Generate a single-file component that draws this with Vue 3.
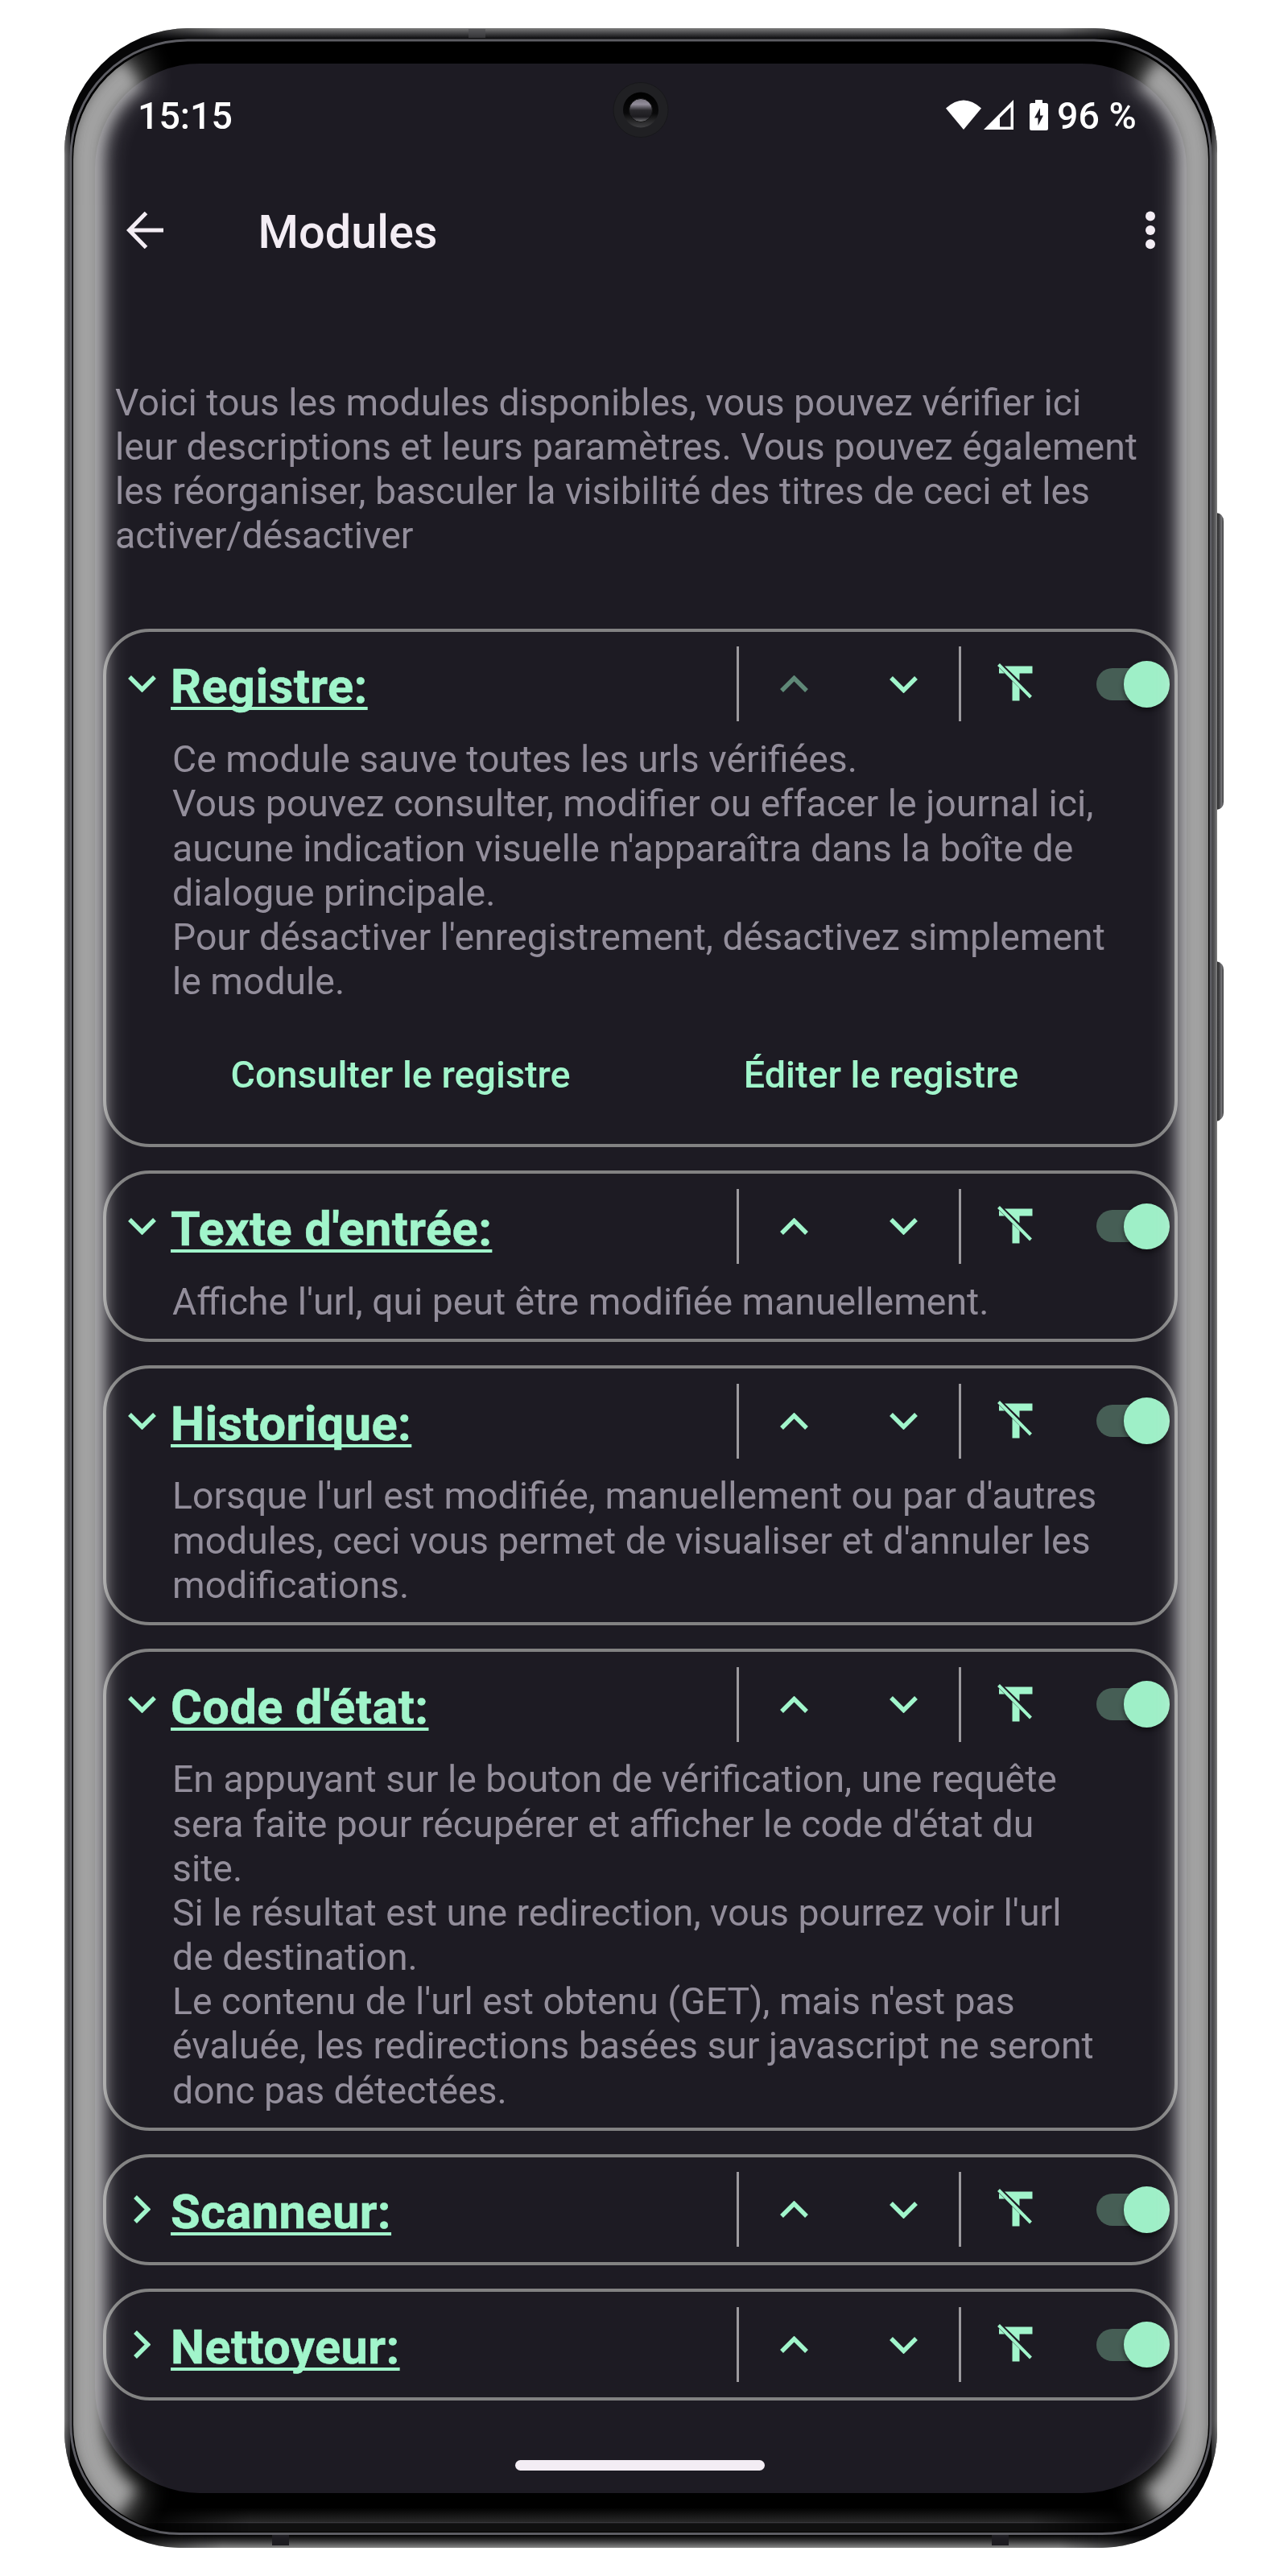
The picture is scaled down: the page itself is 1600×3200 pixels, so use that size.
<script setup>
const modules = [
  {
    title: 'Registre:',
    open: true,
    first: true,
    lines: [
      'Ce module sauve toutes les urls vérifiées.',
      'Vous pouvez consulter, modifier ou effacer le journal ici,',
      "aucune indication visuelle n'apparaîtra dans la boîte de",
      'dialogue principale.',
      "Pour désactiver l'enregistrement, désactivez simplement",
      'le module.',
    ],
    actions: ['Consulter le registre', 'Éditer le registre'],
  },
  { title: "Texte d'entrée:", open: true, lines: ["Affiche l'url, qui peut être modifiée manuellement."] },
  {
    title: 'Historique:',
    open: true,
    lines: [
      "Lorsque l'url est modifiée, manuellement ou par d'autres",
      "modules, ceci vous permet de visualiser et d'annuler les",
      'modifications.',
    ],
  },
  {
    title: "Code d'état:",
    open: true,
    lines: [
      'En appuyant sur le bouton de vérification, une requête',
      "sera faite pour récupérer et afficher le code d'état du",
      'site.',
      "Si le résultat est une redirection, vous pourrez voir l'url",
      'de destination.',
      "Le contenu de l'url est obtenu (GET), mais n'est pas",
      'évaluée, les redirections basées sur javascript ne seront',
      'donc pas détectées.',
    ],
  },
  { title: 'Scanneur:', open: false },
  { title: 'Nettoyeur:', open: false },
]
const intro = [
  'Voici tous les modules disponibles, vous pouvez vérifier ici',
  'leur descriptions et leurs paramètres. Vous pouvez également',
  'les réorganiser, basculer la visibilité des titres de ceci et les',
  'activer/désactiver',
]
</script>

<template>
  <div class="stage">
    <!-- Phone body -->
    <svg class="layer" viewBox="0 0 1600 3200" aria-hidden="true">
      <defs>
        <linearGradient id="rimTop" x1="0" y1="0" x2="0" y2="1">
          <stop offset="0" stop-color="#7c7c7c" /><stop offset=".45" stop-color="#48484a" /><stop offset="1" stop-color="#0c0c0e" />
        </linearGradient>
        <linearGradient id="rimBottom" x1="0" y1="1" x2="0" y2="0">
          <stop offset="0" stop-color="#858585" /><stop offset=".5" stop-color="#3a3a3b" /><stop offset="1" stop-color="#000" />
        </linearGradient>
        <linearGradient id="chin" x1="0" y1="0" x2="0" y2="1">
          <stop offset="0" stop-color="#000" /><stop offset="1" stop-color="#2a2a2a" />
        </linearGradient>
        <linearGradient id="fadeX" x1="0" y1="0" x2="1" y2="0">
          <stop offset="0" stop-color="#fff" stop-opacity="0" /><stop offset=".11" stop-color="#fff" />
          <stop offset=".89" stop-color="#fff" /><stop offset="1" stop-color="#fff" stop-opacity="0" />
        </linearGradient>
        <linearGradient id="fadeY" x1="0" y1="0" x2="0" y2="1">
          <stop offset="0" stop-color="#fff" stop-opacity="0" /><stop offset=".04" stop-color="#fff" />
          <stop offset=".96" stop-color="#fff" /><stop offset="1" stop-color="#fff" stop-opacity="0" />
        </linearGradient>
        <linearGradient id="rimSide" x1="0" y1="0" x2="1" y2="0">
          <stop offset="0" stop-color="#858585" /><stop offset=".35" stop-color="#606062" /><stop offset="1" stop-color="#3c3c3e" />
        </linearGradient>
        <linearGradient id="key" x1="0" y1="0" x2="1" y2="0">
          <stop offset="0" stop-color="#222" /><stop offset=".45" stop-color="#4a4a4c" />
          <stop offset=".7" stop-color="#77777a" /><stop offset="1" stop-color="#39393b" />
        </linearGradient>
        <mask id="maskX"><rect x="130" y="0" width="1332" height="3200" fill="url(#fadeX)" /></mask>
        <mask id="maskChin"><rect x="175" y="0" width="1242" height="3200" fill="url(#fadeX)" /></mask>
        <mask id="maskY"><rect x="0" y="70" width="1600" height="3060" fill="url(#fadeY)" /></mask>
        <clipPath id="body">
          <path d="M235 35H1357A155 155 0 0 1 1512 190V3020A145 145 0 0 1 1367 3165H225A145 145 0 0 1 80 3020V190A155 155 0 0 1 235 35Z" />
        </clipPath>
      </defs>
      <path d="M1511 637Q1520 638 1520 648V996Q1520 1005 1511 1006Z" fill="url(#key)" />
      <path d="M1511 1194Q1520 1196 1520 1205V1382Q1520 1391 1511 1393Z" fill="url(#key)" />
      <g clip-path="url(#body)">
        <rect x="80" y="35" width="1432" height="3130" fill="#060607" />
        <g mask="url(#maskX)">
          <rect x="80" y="35" width="1432" height="13" fill="url(#rimTop)" />
          <rect x="80" y="3149" width="1432" height="16" fill="url(#rimBottom)" />
        </g>
        <g mask="url(#maskY)">
          <rect x="80" y="35" width="7" height="3130" fill="url(#rimSide)" />
          <rect x="-1512" y="35" width="7" height="3130" transform="scale(-1 1)" fill="url(#rimSide)" />
        </g>
        <rect x="338" y="3149" width="21" height="13" fill="#1d1c21" />
        <rect x="1232" y="3149" width="21" height="13" fill="#1d1c21" />
        <rect x="582" y="36" width="21" height="11" fill="#4a4a4c" opacity=".6" />
      </g>
      <path
        d="M233 50H1359A145 145 0 0 1 1504 195V3013A135 135 0 0 1 1369 3147.500H223A135 135 0 0 1 88 3013V195A145 145 0 0 1 233 50Z"
        fill="#000" stroke="#5d5d63" stroke-width="3"
      />
      <g mask="url(#maskChin)">
        <rect x="175" y="3115" width="1242" height="19" fill="url(#chin)" />
        <rect x="175" y="3133" width="1242" height="1.500" fill="#38383c" />
        <rect x="175" y="3135" width="1242" height="10" fill="#101010" />
      </g>
      <path d="M248 79H1344A130 130 0 0 1 1474 209V2967A130 130 0 0 1 1344 3097H248A130 130 0 0 1 118 2967V209A130 130 0 0 1 248 79Z" fill="#1d1b23" />
    </svg>

    <div class="screen">
      <header class="status">
        <span class="clock">15:15</span>
        <span class="indicators">
          <svg class="wifi" viewBox="0 0 44 37"><path d="M0 10.500Q22-9.500 44 10.500L22 37Z" fill="#fff" /></svg>
          <svg class="signal" viewBox="0 0 37 37"><path d="M0 37L37 0V37ZM20 33.500H33.500V9L20 22.500Z" fill="#fff" fill-rule="evenodd" /></svg>
          <svg class="battery" viewBox="0 0 23 38">
            <path d="M7 0H16V4H20.500Q23 4 23 6.500V35.500Q23 38 20.500 38H2.500Q0 38 0 35.500V6.500Q0 4 2.500 4H7ZM13 10L6 22.500H10.500V32L17 19.500H13Z" fill="#fff" fill-rule="evenodd" />
          </svg>
          <span class="percent">96 %</span>
        </span>
      </header>

      <div class="appbar">
        <svg class="back" viewBox="0 0 46 46"><path d="M24.500 1.500L3.500 23L24.500 44.500M3.500 23H46" fill="none" stroke="#f3edf4" stroke-width="5" /></svg>
        <h1>Modules</h1>
        <svg class="more" viewBox="0 0 12 48"><circle cx="6" cy="6.500" r="6" /><circle cx="6" cy="24" r="6" /><circle cx="6" cy="41.200" r="6" /></svg>
      </div>

      <p class="intro"><span v-for="l in intro" :key="l" class="line">{{ l }}</span></p>

      <main class="cards">
        <section v-for="m in modules" :key="m.title" class="card">
          <div class="head">
            <span class="fold">
              <svg v-if="m.open" width="35" height="21" viewBox="0 0 35 21"><path d="M2 2L17.500 17.500L33 2" /></svg>
              <svg v-else width="21" height="35" viewBox="0 0 21 35"><path d="M2 2L17.500 17.500L2 33" /></svg>
            </span>
            <h2>{{ m.title }}</h2>
            <div class="tools">
              <i class="rule"></i>
              <span class="move up" :class="{ disabled: m.first }">
                <svg width="35" height="21" viewBox="0 0 35 21"><path d="M2 19L17.500 3.500L33 19" /></svg>
              </span>
              <span class="move">
                <svg width="35" height="21" viewBox="0 0 35 21"><path d="M2 2L17.500 17.500L33 2" /></svg>
              </span>
              <i class="rule"></i>
              <svg class="clear" viewBox="0 0 44 47">
                <path d="M1.500 1.500L41.500 42" fill="none" stroke="#a1f5cb" stroke-width="4" />
                <path d="M9 3.500H43.500V12.500H27.500V21.500ZM2 5.500L9 12.500H2ZM18.500 22L27.500 31V46.500H18.500Z" fill="#a1f5cb" />
              </svg>
              <span class="switch"><span class="thumb"></span></span>
            </div>
          </div>
          <p v-if="m.lines" class="desc"><span v-for="l in m.lines" :key="l" class="line">{{ l }}</span></p>
          <div v-if="m.actions" class="actions">
            <span v-for="a in m.actions" :key="a" class="action">{{ a }}</span>
          </div>
          <div v-else-if="m.lines" class="pad"></div>
        </section>
      </main>
      <div class="home"></div>
    </div>

    <!-- Edge reflections and camera -->
    <svg class="layer" viewBox="0 0 1600 3200" aria-hidden="true">
      <defs>
        <filter id="soft" filterUnits="userSpaceOnUse" x="0" y="0" width="1600" height="3200"><feGaussianBlur stdDeviation="8.500" /></filter>
        <filter id="wide" filterUnits="userSpaceOnUse" x="0" y="0" width="1600" height="3200"><feGaussianBlur stdDeviation="14" /></filter>
        <clipPath id="glass">
          <path d="M236 53H1356A145 145 0 0 1 1501 198V3012A133 133 0 0 1 1368 3145H224A133 133 0 0 1 91 3012V198A145 145 0 0 1 236 53Z" />
        </clipPath>
        <linearGradient id="lens" x1="0" y1="0" x2="0" y2="1">
          <stop offset="0" stop-color="#77737e" /><stop offset=".25" stop-color="#918c99" /><stop offset=".5" stop-color="#29282c" />
          <stop offset=".78" stop-color="#1c1b1f" /><stop offset="1" stop-color="#77777a" />
        </linearGradient>
        <linearGradient id="ring" x1="0" y1="0" x2="0" y2="1">
          <stop offset="0" stop-color="#000" /><stop offset=".6" stop-color="#09090a" /><stop offset="1" stop-color="#404042" />
        </linearGradient>
      </defs>
      <g clip-path="url(#glass)" fill="none">
        <g filter="url(#soft)" stroke="#fff" stroke-width="44" opacity=".55">
          <path d="M165 90A129 129 0 0 0 107 198V3012A119 119 0 0 0 158 3110" />
          <path d="M1427 90A129 129 0 0 1 1485 198V3012A119 119 0 0 1 1434 3110" />
        </g>
        <g filter="url(#wide)" stroke="#e8e8e8" stroke-width="60" opacity=".24">
          <path d="M184 80A129 129 0 0 0 107 198V3012A119 119 0 0 0 176 3120" />
          <path d="M1408 80A129 129 0 0 1 1485 198V3012A119 119 0 0 1 1416 3120" />
        </g>
      </g>
      <circle cx="796" cy="136.500" r="34" fill="#202023" stroke="#18181b" stroke-width="1" />
      <circle cx="796" cy="136.500" r="22" fill="url(#ring)" />
      <circle cx="796" cy="137" r="14.500" fill="url(#lens)" stroke="#111" stroke-width="1" />
    </svg>
  </div>
</template>

<style>
body { background: #fff; }
</style>

<style scoped>
.stage {
  position: relative;
  width: 1600px;
  height: 3200px;
  overflow: hidden;
  font-family: Roboto, 'Liberation Sans', sans-serif;
  background: #fff;
}
.layer { position: absolute; inset: 0; width: 1600px; height: 3200px; pointer-events: none; }
.screen {
  position: relative;
  box-sizing: border-box;
  width: 1600px;
  padding: 79px 137px 0 128px;
  display: flex;
  flex-direction: column;
}
.status {
  height: 130px;
  display: flex;
  align-items: center;
  justify-content: space-between;
  padding: 0 52px 0 43px;
  color: #fff;
  font-size: 46.500px;
  font-weight: 500;
}
.indicators { display: flex; align-items: center; }
.indicators svg { display: block; margin-bottom: 3px; }
.wifi { width: 44px; height: 37px; margin-right: 3px; }
.signal { width: 37px; height: 37px; margin-right: 20px; }
.battery { width: 23px; height: 38px; margin-right: 11px; }
.percent { width: 98px; white-space: nowrap; }
.appbar { height: 153px; display: flex; align-items: center; padding: 0 28px 0 29px; }
.back { width: 46px; height: 46px; }
.appbar h1 {
  flex: 1;
  margin: 5px 0 0 117.500px;
  color: #f3edf4;
  font-size: 57.700px;
  font-weight: 500;
  line-height: 70px;
}
.more { width: 12px; height: 48px; fill: #f3edf4; }
.intro { margin: 110.800px 0 0 15px; }
.line {
  display: block;
  white-space: nowrap;
  font-size: 46.350px;
  line-height: 55.170px;
  color: #938e9b;
}
.cards { margin-top: 87.200px; display: flex; flex-direction: column; gap: 29.200px; }
.card { box-sizing: border-box; border: 4px solid #828282; border-radius: 58px; }
.head { height: 130.500px; display: flex; align-items: center; }
.fold { width: 80px; padding-left: 9px; box-sizing: border-box; display: flex; justify-content: center; }
.fold svg, .move svg { display: block; fill: none; stroke: #a1f5cb; stroke-width: 5.500; }
h2 {
  flex: 1;
  margin: 7px 0 0;
  color: #a1f5cb;
  font-size: 59.500px;
  font-weight: 700;
  line-height: 70px;
  letter-spacing: .43px;
  -webkit-text-stroke: .5px #a1f5cb;
  text-decoration: underline;
  text-decoration-thickness: 3.500px;
  text-underline-offset: 5px;
  text-decoration-skip-ink: none;
  white-space: nowrap;
}
.tools { display: flex; align-items: center; padding-right: 6px; }
.rule { width: 3px; height: 93px; background: #9c9a9e; }
.move { width: 136.500px; display: flex; justify-content: center; padding-top: 1px; }
.up { padding-top: 0; }
.disabled { opacity: .5; }
.clear { width: 44px; height: 47px; margin-left: 45px; margin-top: -4px; }
.switch { width: 91px; height: 40px; margin-left: 79px; border-radius: 20px; background: linear-gradient(90deg, #465e55 70px, transparent 70px); display: flex; align-items: center; justify-content: flex-end; }
.thumb { width: 57.500px; height: 57.500px; flex: none; border-radius: 50%; background: #9eefc7; box-shadow: 0 4px 6px rgba(0, 0, 0, .45); }
.desc { margin: 0 0 0 82px; padding-top: 1px; }
.pad { height: 17.800px; }
.actions { height: 173.800px; box-sizing: border-box; padding: 2px 66px 0 67px; display: flex; align-items: center; }
.action { flex: 1; text-align: center; color: #a1f5cb; font-size: 46.700px; font-weight: 500; }
.home { width: 310px; height: 13px; margin: 74px 0 0 512px; border-radius: 7px; background: #f3edf4; }
</style>
